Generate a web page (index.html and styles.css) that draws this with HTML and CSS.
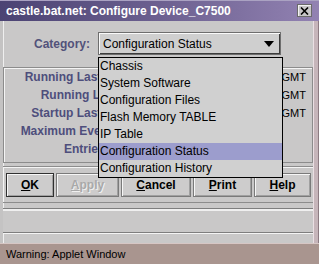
FILE: index.html
```html
<!DOCTYPE html>
<html lang="en">
<head>
    <meta charset="UTF-8">
    <title>Configure Device_C7500</title>
    <link rel="stylesheet" href="styles.css">
</head>
<body>
    <div class="window">
        <div class="titlebar">
            <span class="title">castle.bat.net: Configure Device_C7500</span>
            <span class="close">
                <svg width="9" height="8" viewBox="0 0 9 8"><path d="M1 0.5 L8 7.5 M8 0.5 L1 7.5" stroke="#000" stroke-width="1.6"/></svg>
            </span>
        </div>

        <div class="frame">
            <div class="content">
                <div class="category-row">
                    <span class="field-label">Category:</span>
                    <div class="combo">
                        <span class="combo-text">Configuration Status</span>
                        <svg class="arrow" width="10" height="6" viewBox="0 0 10 6"><polygon points="0,0 10,0 5,6" fill="#000"/></svg>
                    </div>
                </div>

                <div class="details">
                    <div class="row"><span class="label">Running Last Changed:</span><span class="value">03/14/2000 10:31:02 GMT</span></div>
                    <div class="row"><span class="label">Running Last Saved:</span><span class="value">03/14/2000 09:12:40 GMT</span></div>
                    <div class="row"><span class="label">Startup Last Changed:</span><span class="value">03/13/2000 17:45:18 GMT</span></div>
                    <div class="row"><span class="label">Maximum Event Entries:</span><span class="value value-num">10</span></div>
                    <div class="row"><span class="label">Entries Bumped:</span><span class="value value-num">0</span></div>
                </div>

                <div class="buttons">
                    <button class="btn btn-ok"><u>O</u>K</button>
                    <button class="btn btn-apply" disabled><u>A</u>pply</button>
                    <button class="btn btn-cancel"><u>C</u>ancel</button>
                    <button class="btn btn-print"><u>P</u>rint</button>
                    <button class="btn btn-help"><u>H</u>elp</button>
                </div>

                <div class="status"></div>
            </div>
            <div class="side"></div>
        </div>

        <div class="warning">Warning: Applet Window</div>

        <!-- lista abierta del combo -->
        <ul class="dropdown">
            <li>Chassis</li>
            <li>System Software</li>
            <li>Configuration Files</li>
            <li>Flash Memory TABLE</li>
            <li>IP Table</li>
            <li class="selected">Configuration Status</li>
            <li>Configuration History</li>
        </ul>
    </div>
</body>
</html>
```

FILE: styles.css
```css
body {
    margin: 0;
    font-family: "Liberation Sans", Arial, sans-serif;
    font-size: 12px;
    color: #000;
    background: #c9c8c8;
}

.window {
    position: relative;
    width: 319px;
    height: 264px;
    display: flex;
    flex-direction: column;
    overflow: hidden;
    background: #c9c8c8;
}

.titlebar {
    height: 21px;
    flex: none;
    display: flex;
    align-items: center;
    padding-left: 6px;
    background: linear-gradient(to right, #4b4373, #6c6090 50%, #9282b2);
    box-shadow: inset 0 1px 0 #aaa2c2;
}

.title {
    flex: 1;
    color: #fff;
    font-weight: bold;
    font-size: 12px;
    white-space: nowrap;
}

.close {
    width: 15px;
    height: 13px;
    margin-right: 7px;
    display: flex;
    align-items: center;
    justify-content: center;
    background: #c8c6c8;
    border: 1px solid #6a6a6a;
    box-sizing: border-box;
    box-shadow: inset 1px 1px 0 #f2f2f2;
}

.frame {
    flex: 1;
    display: flex;
}

.content {
    flex: 1;
    display: flex;
    flex-direction: column;
    border-left: 3px solid #c4c3c3;
    box-shadow: inset 1px 0 0 #efefef;
}

.side {
    width: 4px;
    background: #c6b5ba;
    border-left: 1px solid #eadfe3;
    border-right: 1px solid #8c7b82;
}

.category-row {
    display: flex;
    align-items: center;
    gap: 8px;
    margin-top: 11px;
    height: 23px;
}

.field-label {
    width: 87px;
    text-align: right;
    font-weight: bold;
    color: #52527a;
}

.combo {
    width: 183px;
    height: 23px;
    box-sizing: border-box;
    display: flex;
    align-items: center;
    padding: 0 6px 0 4px;
    background: #cfcfcf;
    border: 1px solid #6e6e6e;
    box-shadow: inset 1px 1px 0 #fafafa, inset -1px -1px 0 #3c3c3c;
}

.combo-text {
    flex: 1;
}

.details {
    margin-top: 12px;
    height: 96px;
    box-sizing: border-box;
    border: 1px solid #8c8c8c;
    box-shadow: inset 1px 1px 0 #f4f4f4;
}

.row {
    display: flex;
    align-items: center;
    height: 18px;
}

.label {
    width: 156px;
    text-align: right;
    font-weight: bold;
    color: #4e4e7c;
    white-space: nowrap;
}

.value {
    width: 140px;
    margin-left: 6px;
    text-align: right;
    font-size: 11px;
    white-space: nowrap;
}

.value-num {
    text-align: left;
}

.buttons {
    margin-top: 3px;
    height: 37px;
    box-sizing: border-box;
    display: flex;
    gap: 2px;
    padding: 6px 0 0 3px;
    border-top: 1px solid #8c8c8c;
    border-bottom: 1px solid #8c8c8c;
    box-shadow: inset 1px 1px 0 #f4f4f4;
}

.btn {
    height: 24px;
    padding: 0;
    font-family: "Liberation Sans", Arial, sans-serif;
    font-size: 12px;
    font-weight: bold;
    color: #000;
    background: #cdcccc;
    border: 1px solid #7a7a7a;
    box-shadow: inset 1px 1px 0 #f6f6f6, inset -1px -1px 0 #a0a0a0;
}

.btn-ok { width: 48px; border-color: #303030; }
.btn-apply { width: 63px; color: #a9a9a9; text-shadow: 1px 1px 0 #f0f0f0; }
.btn-cancel { width: 70px; }
.btn-print { width: 59px; }
.btn-help { width: 57px; }

.status {
    margin-top: 5px;
    height: 25px;
    box-sizing: border-box;
    border-top: 1px solid #7e7e7e;
    border-bottom: 1px solid #7e7e7e;
    box-shadow: inset 0 2px 0 #efefef, 0 1px 0 #f4f4f4;
    background: #c9c8c8;
}

.warning {
    height: 21px;
    flex: none;
    display: flex;
    align-items: center;
    padding-left: 6px;
    font-size: 11px;
    background: #a9958f;
    box-shadow: inset 0 1px 0 #d6c6c4;
}

.dropdown {
    position: absolute;
    left: 98px;
    top: 57px;
    width: 185px;
    height: 121px;
    box-sizing: border-box;
    margin: 0;
    padding: 0;
    list-style: none;
    background: #d0d0d0;
    border: 1px solid #000;
}

.dropdown li {
    height: 17px;
    line-height: 17px;
    padding-left: 1px;
    white-space: nowrap;
}

.dropdown .selected {
    background: #9c9dcd;
}
```
